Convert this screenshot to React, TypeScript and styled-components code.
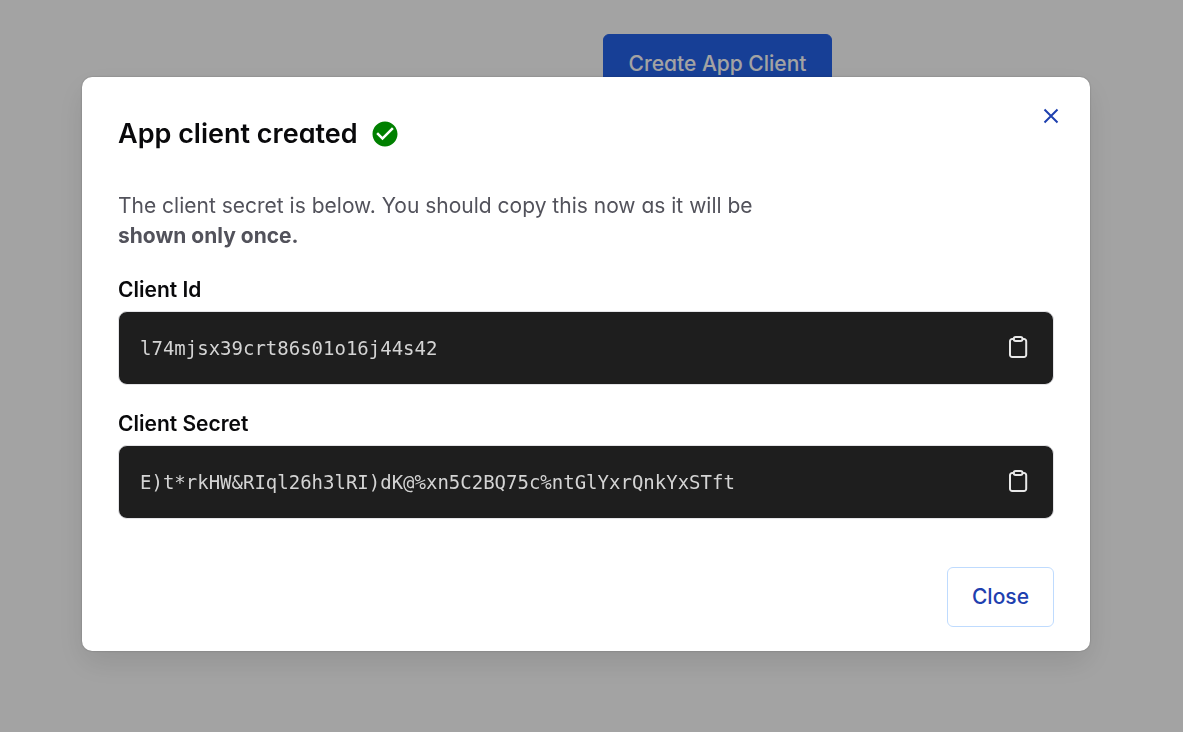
import React from "react";
import styled, { createGlobalStyle } from "styled-components";
import { MdCheckCircle } from "react-icons/md";

const GlobalStyle = createGlobalStyle`
  * { box-sizing: border-box; }
  body {
    margin: 0;
    background: #fff;
    font-family: Inter, "Liberation Sans", sans-serif;
    font-feature-settings: "cv11";
    font-size: 21px;
    line-height: 30px;
    color: #09090b;
  }
  button { font: inherit; font-feature-settings: inherit; cursor: pointer; }
`;

const Page = styled.main`
  display: flex;
  justify-content: center;
  padding: 34px 0 0 252px;
  min-height: 100vh;
  align-items: flex-start;
`;

const Button = styled.button<{ $primary?: boolean }>`
  height: 60px;
  padding: 0 ${(p) => (p.$primary ? 25 : 24)}px;
  border-radius: 6px;
  font-weight: 500;
  border: 1px solid ${(p) => (p.$primary ? "#2563eb" : "#bfdbfe")};
  background: ${(p) => (p.$primary ? "#2563eb" : "#fff")};
  color: ${(p) => (p.$primary ? "#fff" : "#1e40af")};
`;

const Overlay = styled.div`
  position: fixed;
  inset: 0;
  display: flex;
  align-items: flex-start;
  justify-content: center;
  padding: 77px 93px 77px 82px;
  background: rgba(0, 0, 0, 0.36);
  overflow: auto;
`;

const Dialog = styled.section`
  width: 100%;
  max-width: 1008px;
  padding: 24px 36px;
  border-radius: 10px;
  background: #fff;
  box-shadow: 0 12px 30px rgba(0, 0, 0, 0.1), 0 0 2px rgba(0, 0, 0, 0.3);
`;

const Header = styled.header`
  display: flex;
  align-items: flex-start;
  justify-content: space-between;
`;

const Title = styled.h1`
  display: flex;
  align-items: center;
  gap: 12px;
  margin: 15px 0 0;
  font-size: 27px;
  line-height: 36px;
  font-weight: 600;
`;

const CloseIcon = styled.button`
  display: flex;
  padding: 3px;
  margin-right: -12px;
  border: 0;
  background: none;
  color: #1e40af;
`;

const Message = styled.p`
  margin: 39px 0 24px;
  max-width: 660px;
  color: #52525b;
  strong { font-weight: 700; }
`;

const Field = styled.section`
  margin-bottom: 24px;
`;

const FieldName = styled.h2`
  margin: 0 0 6px;
  font-size: 21px;
  line-height: 30px;
  font-weight: 600;
`;

const CodeBox = styled.div`
  display: flex;
  align-items: center;
  justify-content: space-between;
  height: 74px;
  padding: 0 21px;
  border: 1px solid #e4e4e7;
  border-radius: 9px;
  background: #1e1e1e;
`;

const Code = styled.code`
  font-family: Consolas, "DejaVu Sans Mono", monospace;
  font-size: 19px;
  color: #d4d4d4;
`;

const CopyButton = styled.button`
  display: flex;
  padding: 0;
  border: 0;
  background: none;
  color: #e8e8e8;
`;

const Footer = styled.footer`
  display: flex;
  justify-content: flex-end;
  margin-top: 48px;
`;

function Clipboard() {
  return (
    <svg width="26" height="26" viewBox="0 0 26 26" fill="none" stroke="currentColor" strokeWidth="2" aria-hidden="true">
      <path d="M8.300 4H6.200A2.200 2.200 0 0 0 4 6.200V19.800A2.200 2.200 0 0 0 6.200 22H18A2.200 2.200 0 0 0 20.200 19.800V6.200A2.200 2.200 0 0 0 18 4H16" />
      <rect x="7.700" y="2" width="8.800" height="4" rx="2" />
    </svg>
  );
}

function SecretField({ name, value }: { name: string; value: string }) {
  return (
    <Field>
      <FieldName>{name}</FieldName>
      <CodeBox>
        <Code>{value}</Code>
        <CopyButton type="button" aria-label={`Copy ${name}`}>
          <Clipboard />
        </CopyButton>
      </CodeBox>
    </Field>
  );
}

export default function App() {
  return (
    <>
      <GlobalStyle />
      <Page>
        <Button type="button" $primary>Create App Client</Button>
      </Page>
      <Overlay>
        <Dialog role="dialog" aria-modal="true" aria-labelledby="dialog-title">
          <Header>
            <Title id="dialog-title">
              App client created
              <MdCheckCircle size={30} color="#008000" aria-hidden="true" />
            </Title>
            <CloseIcon type="button" aria-label="Dismiss">
              <svg width="24" height="24" viewBox="0 0 24 24" stroke="currentColor" strokeWidth="2" aria-hidden="true">
                <path d="M5.500 5.500 18.500 18.500M18.500 5.500 5.500 18.500" />
              </svg>
            </CloseIcon>
          </Header>
          <Message>
            The client secret is below. You should copy this now as it will be <strong>shown only once.</strong>
          </Message>
          <SecretField name="Client Id" value="l74mjsx39crt86s01o16j44s42" />
          <SecretField name="Client Secret" value="E)t*rkHW&RIql26h3lRI)dK@%xn5C2BQ75c%ntGlYxrQnkYxSTft" />
          <Footer>
            <Button type="button">Close</Button>
          </Footer>
        </Dialog>
      </Overlay>
    </>
  );
}
